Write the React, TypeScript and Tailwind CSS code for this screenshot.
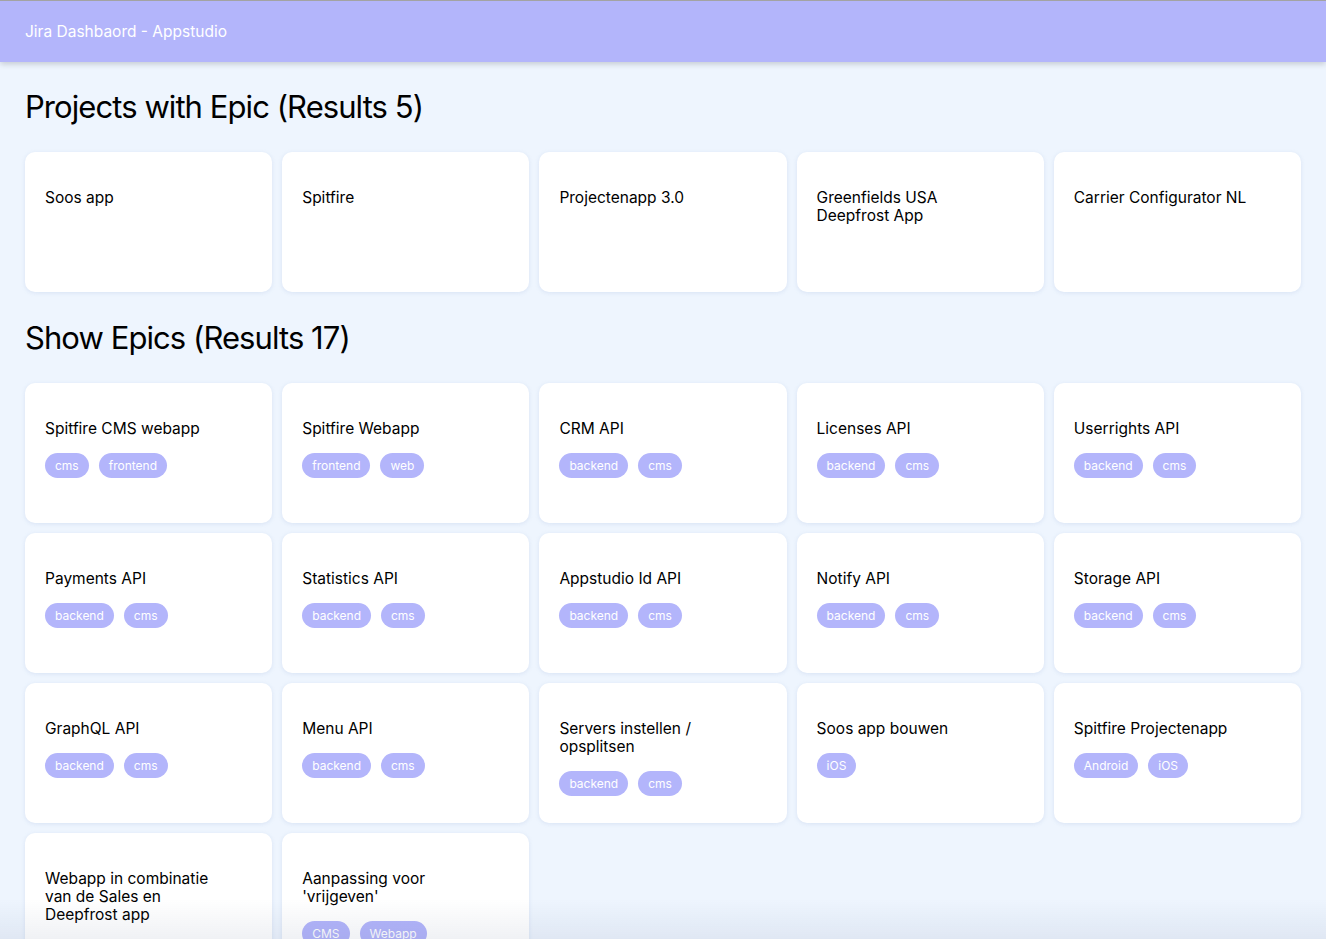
import React from 'react';

type Epic = {
  title: string;
  labels: string[];
};

const projects = ['Soos app', 'Spitfire', 'Projectenapp 3.0', 'Greenfields USA Deepfrost App', 'Carrier Configurator NL'];

const epics: Epic[] = [
  { title: 'Spitfire CMS webapp', labels: ['cms', 'frontend'] },
  { title: 'Spitfire Webapp', labels: ['frontend', 'web'] },
  { title: 'CRM API', labels: ['backend', 'cms'] },
  { title: 'Licenses API', labels: ['backend', 'cms'] },
  { title: 'Userrights API', labels: ['backend', 'cms'] },
  { title: 'Payments API', labels: ['backend', 'cms'] },
  { title: 'Statistics API', labels: ['backend', 'cms'] },
  { title: 'Appstudio Id API', labels: ['backend', 'cms'] },
  { title: 'Notify API', labels: ['backend', 'cms'] },
  { title: 'Storage API', labels: ['backend', 'cms'] },
  { title: 'GraphQL API', labels: ['backend', 'cms'] },
  { title: 'Menu API', labels: ['backend', 'cms'] },
  { title: 'Servers instellen / opsplitsen', labels: ['backend', 'cms'] },
  { title: 'Soos app bouwen', labels: ['iOS'] },
  { title: 'Spitfire Projectenapp', labels: ['Android', 'iOS'] },
  { title: 'Webapp in combinatie van de Sales en Deepfrost app', labels: [] },
  { title: "Aanpassing voor 'vrijgeven'", labels: ['CMS', 'Webapp'] },
];

const Card = ({ title, labels }: { title: string; labels?: string[] }) => (
  <div className="bg-white rounded-[10px] shadow-[0_1px_4px_rgba(120,150,200,0.18)] min-h-[140px] px-5 pt-[37px] pb-6">
    <h3 className="text-[15.5px] leading-[18px] text-black max-w-[180px]">{title}</h3>
    {labels && labels.length > 0 && (
      <div className="flex flex-wrap gap-[10px] mt-[15px]">
        {labels.map((label) => (
          <span
            key={label}
            className="bg-[#b3b5fb] text-white text-[12px] leading-[25px] h-[25px] px-[10px] rounded-full"
          >
            {label}
          </span>
        ))}
      </div>
    )}
  </div>
);

const App = () => {
  return (
    <div className="min-h-screen bg-[#eef5fe] font-['Inter',sans-serif]">
      <header className="h-[62px] bg-[#b3b5fb] border-t border-[#a3a3a3] shadow-[0_2px_6px_rgba(0,0,0,0.18)] flex items-center px-[25px]">
        <span className="text-white text-[15.5px]">Jira Dashbaord - Appstudio</span>
      </header>

      <main className="px-[25px] pt-[26px] pb-10">
        <h2 className="text-[31px] leading-[38px] tracking-[-0.03em] text-black">
          Projects with Epic (Results {projects.length})
        </h2>
        <div className="grid grid-cols-5 gap-[10px] mt-[26px]">
          {projects.map((p) => (
            <Card key={p} title={p} />
          ))}
        </div>

        <h2 className="text-[31px] leading-[38px] tracking-[-0.03em] text-black mt-[27px]">
          Show Epics (Results {epics.length})
        </h2>
        <div className="grid grid-cols-5 gap-[10px] mt-[26px]">
          {epics.map((e) => (
            <Card key={e.title} title={e.title} labels={e.labels} />
          ))}
        </div>
      </main>

      {/* window bottom fade */}
      <div className="fixed left-0 right-0 bottom-0 h-[40px] pointer-events-none bg-gradient-to-b from-transparent to-[rgba(60,80,120,0.08)]" />
    </div>
  );
};

export default App;
